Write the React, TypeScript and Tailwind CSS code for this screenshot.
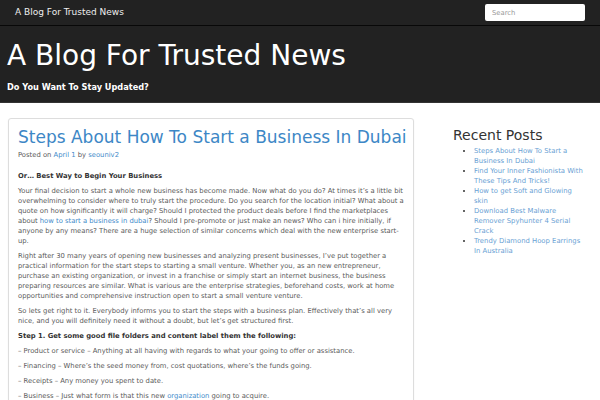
import React from 'react';

const recentPosts = [
  ['Steps About How To Start a', 'Business In Dubai'],
  ['Find Your Inner Fashionista With', 'These Tips And Tricks!'],
  ['How to get Soft and Glowing', 'skin'],
  ['Download Best Malware', 'Remover Spyhunter 4 Serial', 'Crack'],
  ['Trendy Diamond Hoop Earrings', 'In Australia'],
];

const link = 'text-[#428bca]';

function Navbar() {
  return (
    <div className="h-[26px] bg-[#222222] border-b border-[#080808] flex items-center justify-between pl-[15px] pr-[15px]">
      <span className="text-[9px] text-[#eeeeee]">A Blog For Trusted News</span>
      <input
        placeholder="Search"
        className="w-[100px] h-[17px] bg-white rounded-[2px] text-[6.8px] pl-[7px] placeholder:text-[#999999] outline-none"
      />
    </div>
  );
}

function Header() {
  return (
    <div className="h-[77px] bg-[#222222] px-[7px] pt-[14px] border-b border-[#333333]">
      <h1 className="text-[28px] leading-[32px] text-white">A Blog For Trusted News</h1>
      <p className="mt-[9px] text-[8.2px] leading-[12px] font-bold text-white">Do You Want To Stay Updated?</p>
    </div>
  );
}

function Article() {
  return (
    <article className="w-[406px] border border-[#dddddd] rounded-[3px] shadow-[0_1px_2px_rgba(0,0,0,0.06)] bg-white pt-[8px] pl-[9px] pr-[9px] pb-4 text-[6.8px] leading-[10px] text-[#5a5a5a] whitespace-nowrap">
      <h2 className="text-[17px] leading-[20px] text-[#3d87c6]">Steps About How To Start a Business In Dubai</h2>
      <p className="mt-[3px] mb-[11px]">
        Posted on <a className={link}>April 1</a> by <a className={link}>seouniv2</a>
      </p>
      <p className="font-bold text-[#333333] mb-[5px]">Or… Best Way to Begin Your Business</p>
      <p className="mb-[5px]">
        Your final decision to start a whole new business has become made. Now what do you do? At times it’s a little bit<br />
        overwhelming to consider where to truly start the procedure. Do you search for the location initial? What about a<br />
        quote on how significantly it will charge? Should I protected the product deals before I find the marketplaces<br />
        about <a className={link}>how to start a business in dubai</a>? Should I pre-promote or just make an news? Who can i hire initially, if<br />
        anyone by any means? There are a huge selection of similar concerns which deal with the new enterprise start-<br />
        up.
      </p>
      <p className="mb-[5px]">
        Right after 30 many years of opening new businesses and analyzing present businesses, I’ve put together a<br />
        practical information for the start steps to starting a small venture. Whether you, as an new entrepreneur,<br />
        purchase an existing organization, or invest in a franchise or simply start an internet business, the business<br />
        preparing resources are similar. What is various are the enterprise strategies, beforehand costs, work at home<br />
        opportunities and comprehensive instruction open to start a small venture venture.
      </p>
      <p className="mb-[5px]">
        So lets get right to it. Everybody informs you to start the steps with a business plan. Effectively that’s all very<br />
        nice, and you will definitely need it without a doubt, but let’s get structured first.
      </p>
      <p className="font-bold text-[#333333] mb-[5px]">Step 1. Get some good file folders and content label them the following:</p>
      <p className="mb-[5px]">– Product or service – Anything at all having with regards to what your going to offer or assistance.</p>
      <p className="mb-[5px]">– Financing – Where’s the seed money from, cost quotations, where’s the funds going.</p>
      <p className="mb-[5px]">– Receipts – Any money you spent to date.</p>
      <p className="mb-[5px]">
        – Business – Just what form is that this new <a className={link}>organization</a> going to acquire.
      </p>
    </article>
  );
}

function Sidebar() {
  return (
    <aside className="ml-[39px] pt-[9px]">
      <h3 className="text-[14px] leading-[16px] text-[#333333] mb-[3px]">Recent Posts</h3>
      <ul className="list-disc pl-[21px] text-[6.85px] leading-[10px] text-[#6a9fd4] marker:text-[#333333] whitespace-nowrap">
        {recentPosts.map((lines) => (
          <li key={lines[0]}>
            <a>
              {lines.map((line, i) => (
                <React.Fragment key={line}>
                  {i > 0 && <br />}
                  {line}
                </React.Fragment>
              ))}
            </a>
          </li>
        ))}
      </ul>
    </aside>
  );
}

export default function App() {
  return (
    <div className="w-[600px] h-[400px] overflow-hidden bg-white font-['DejaVu_Sans',sans-serif]">
      <Navbar />
      <Header />
      <div className="flex items-start pl-[8px] mt-[15px]">
        <Article />
        <Sidebar />
      </div>
    </div>
  );
}
